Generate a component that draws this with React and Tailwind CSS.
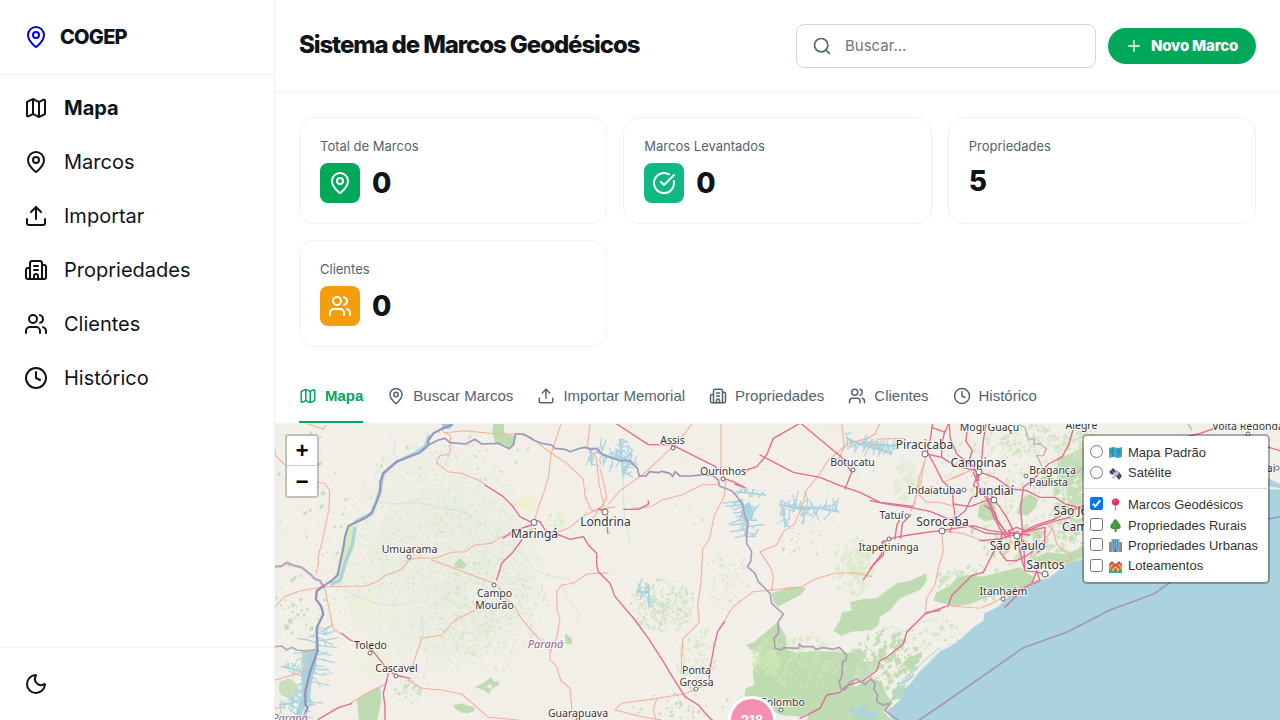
import React from "react";
import {
  Map as MapIcon, MapPin, Upload, Building2, Users, Clock, Moon, Search, Plus, CircleCheckBig,
} from "lucide-react";

const navItems = [
  { icon: MapIcon, label: "Mapa", active: true },
  { icon: MapPin, label: "Marcos" },
  { icon: Upload, label: "Importar" },
  { icon: Building2, label: "Propriedades" },
  { icon: Users, label: "Clientes" },
  { icon: Clock, label: "Histórico" },
];

const tabs = [
  { icon: MapIcon, label: "Mapa", active: true },
  { icon: MapPin, label: "Buscar Marcos" },
  { icon: Upload, label: "Importar Memorial" },
  { icon: Building2, label: "Propriedades" },
  { icon: Users, label: "Clientes" },
  { icon: Clock, label: "Histórico" },
];

const stats = [
  { label: "Total de Marcos", value: "0", icon: MapPin, color: "bg-[#00a859]" },
  { label: "Marcos Levantados", value: "0", icon: CircleCheckBig, color: "bg-[#10b981]" },
  { label: "Propriedades", value: "5" },
  { label: "Clientes", value: "0", icon: Users, color: "bg-[#f59e0b]" },
];

function Sidebar() {
  return (
    <aside className="flex h-full w-[275px] shrink-0 flex-col border-r border-[#eff3f4]">
      <div className="flex h-[75px] shrink-0 items-center gap-3 border-b border-[#eff3f4] px-6">
        <MapPin size={24} color="#0000ee" />
        <span className="text-xl font-extrabold tracking-[-0.75px]">COGEP</span>
      </div>
      <nav className="flex flex-1 flex-col pt-1.5">
        {navItems.map(({ icon: Icon, label, active }) => (
          <a key={label} className="flex h-[54px] items-center gap-4 px-6">
            <Icon size={24} />
            <span className={active ? "text-xl font-bold" : "text-xl"}>{label}</span>
          </a>
        ))}
      </nav>
      <div className="flex h-[73px] shrink-0 items-center border-t border-[#eff3f4] px-6">
        <Moon size={24} />
      </div>
    </aside>
  );
}

function Header() {
  return (
    <header className="flex h-[93px] shrink-0 items-center justify-between border-b border-[#eff3f4] px-6">
      <h1 className="mb-[3px] text-2xl font-extrabold tracking-[-1.1px]">Sistema de Marcos Geodésicos</h1>
      <div className="flex items-center gap-3">
        <label className="flex h-11 w-[300px] items-center gap-[13px] rounded-lg border border-[#cfd9de] px-[15px] text-[#536471]">
          <Search size={20} className="shrink-0" />
          <input className="w-full pt-px text-[15px] outline-none placeholder:text-[#6b7884]" placeholder="Buscar..." />
        </label>
        <button className="flex h-9 w-[148px] items-center gap-2 rounded-full bg-[#00a859] pl-[17px] text-[15px] font-extrabold tracking-[-0.2px] whitespace-nowrap text-white">
          <Plus size={18} strokeWidth={1.75} />
          <span className="pt-px">Novo Marco</span>
        </button>
      </div>
    </header>
  );
}

function StatCard({ label, value, icon: Icon, color }) {
  return (
    <div className="flex h-[107px] flex-col rounded-2xl border border-[#eff3f4] px-5 pt-[18px]">
      <div className="text-[13px] leading-5 text-[#536471]">{label}</div>
      {Icon ? (
        <div className="mt-[7px] flex items-center gap-3">
          <div className={"flex size-10 items-center justify-center rounded-lg text-white " + color}>
            <Icon size={24} />
          </div>
          <span className="text-[28px] leading-8 font-extrabold tracking-[-1px]">{value}</span>
        </div>
      ) : (
        <span className="mt-[9px] text-[28px] leading-8 font-extrabold tracking-[-1px]">{value}</span>
      )}
    </div>
  );
}

/* Deterministic pseudo random generator. */
function generator(seed) {
  let s = seed;
  return () => {
    s = (s * 16807) % 2147483647;
    return s / 2147483647;
  };
}

/* Small vegetation patches inside an ellipse. */
function scatter(seed, cx, cy, rx, ry, n, size) {
  const rnd = generator(seed * 7919);
  let d = "";
  for (let i = 0; i < n; i++) {
    const a = rnd() * Math.PI * 2;
    const r = Math.pow(rnd(), 0.62);
    const x = cx + Math.cos(a) * r * rx;
    const y = cy + Math.sin(a) * r * ry;
    const k = size * (0.3 + rnd() * rnd() * 1.6);
    d += `M${x.toFixed(1)} ${y.toFixed(1)}l${k.toFixed(1)} ${(-k * rnd()).toFixed(1)} ${(k * 0.4 * rnd()).toFixed(1)} ${(k * 0.9).toFixed(1)} ${(-k * 0.9).toFixed(1)} ${(k * 0.5).toFixed(1)}z`;
  }
  return d;
}

/* Dendritic reservoir arms growing from both sides of a centre line. */
function arms(seed, pts, len, step) {
  const rnd = generator(seed * 104729);
  let d = "";
  for (let i = 0; i < pts.length - 1; i++) {
    const [x1, y1] = pts[i];
    const [x2, y2] = pts[i + 1];
    const L = Math.hypot(x2 - x1, y2 - y1);
    const nx = -(y2 - y1) / L;
    const ny = (x2 - x1) / L;
    for (let t = 0; t < L; t += step) {
      const side = rnd() > 0.5 ? 1 : -1;
      const l = len * (0.3 + rnd());
      const x = x1 + ((x2 - x1) * t) / L;
      const y = y1 + ((y2 - y1) * t) / L;
      const mx = x + nx * side * l * 0.5 + (rnd() - 0.5) * 14;
      const my = y + ny * side * l * 0.5 + (rnd() - 0.5) * 14;
      const ex = x + nx * side * l + (rnd() - 0.5) * 22;
      const ey = y + ny * side * l + (rnd() - 0.5) * 22;
      d += `M${x.toFixed(1)} ${y.toFixed(1)}L${mx.toFixed(1)} ${my.toFixed(1)} ${ex.toFixed(1)} ${ey.toFixed(1)}`;
      d += `M${mx.toFixed(1)} ${my.toFixed(1)}l${((rnd() - 0.5) * 22).toFixed(1)} ${((rnd() - 0.5) * 22).toFixed(1)}`;
    }
  }
  return d;
}

const lakes = [
  [3, [[128, 620], [122, 690], [105, 760], [98, 830], [70, 890]], 55, 8, 3.5],
  [5, [[20, 740], [60, 750], [100, 760]], 24, 9, 3],
  [7, [[15, 855], [50, 850], [95, 830]], 26, 8, 3],
  [9, [[945, 85], [950, 135]], 14, 9, 3],
  [13, [[965, 95], [1005, 112], [1045, 115], [1075, 135]], 32, 7, 3.5],
  [15, [[1035, 60], [1045, 170]], 22, 8, 3.5],
  [17, [[1400, 240], [1412, 290], [1415, 350]], 40, 6, 4],
  [19, [[1385, 215], [1470, 225]], 12, 8, 3],
  [21, [[1515, 255], [1560, 262], [1620, 262], [1690, 275]], 34, 6, 3.5],
  [25, [[1525, 270], [1530, 320]], 12, 8, 3],
  [27, [[1715, 55], [1760, 75], [1800, 85], [1850, 100]], 26, 6, 3.5],
  [29, [[1770, 72], [1870, 78]], 14, 7, 3],
  [33, [[1090, 515], [1120, 518]], 26, 6, 4],
  [35, [[1120, 530], [1122, 560]], 8, 9, 3],
  [37, [[1730, 875], [1790, 880]], 26, 7, 5],
  [39, [[1780, 875], [1800, 900]], 18, 7, 4],
];

const speckles = [
  [11, 480, 280, 260, 210, 1700, 4, "#cfe3c2", 0.6],
  [23, 480, 500, 340, 220, 2200, 4, "#cde2c1", 0.6],
  [31, 650, 580, 170, 170, 900, 4.5, "#c5deb9", 0.55],
  [41, 270, 560, 60, 65, 120, 11, "#edf3c9", 0.5],
  [43, 290, 710, 60, 60, 150, 10, "#e8f1c8", 0.6],
  [47, 755, 250, 28, 22, 60, 9, "#e8f1bd", 0.8],
  [53, 840, 300, 35, 25, 60, 6, "#d3ebb6", 0.8],
  [59, 100, 250, 110, 240, 60, 8, "#c0ddb4", 0.9],
  [61, 540, 110, 240, 80, 80, 6, "#c6e0ba", 0.9],
  [67, 60, 570, 90, 100, 50, 8, "#c0ddb4", 0.9],
  [71, 400, 800, 60, 50, 90, 5, "#c0ddb5", 0.9],
  [73, 1160, 555, 100, 80, 620, 5, "#c6dfb9", 0.8],
  [79, 1355, 480, 70, 90, 170, 5, "#cfe3c4", 0.7],
  [83, 1260, 720, 60, 100, 140, 8, "#d2e8bd", 0.8],
  [89, 1220, 870, 160, 60, 90, 6, "#c0dcb4", 0.9],
  [97, 1725, 440, 60, 90, 200, 10, "#d5eabf", 0.75],
  [101, 1580, 360, 70, 60, 50, 6, "#c3deb7", 0.9],
  [103, 1890, 180, 40, 60, 130, 10, "#dcedc4", 0.7],
  [107, 1700, 160, 330, 180, 80, 5, "#cbe2bf", 0.8],
  [109, 2200, 190, 230, 160, 500, 7, "#cde4bd", 0.75],
  [113, 2380, 230, 50, 130, 240, 11, "#bbdaae", 0.8],
  [127, 2270, 380, 150, 60, 260, 9, "#c3dfb6", 0.8],
  [131, 2080, 490, 110, 60, 150, 9, "#c5e0b8", 0.8],
  [137, 1830, 720, 100, 90, 200, 11, "#bedbb1", 0.9],
  [139, 1150, 180, 330, 180, 60, 5, "#cbe2bf", 0.8],
  [149, 2330, 60, 160, 50, 200, 9, "#c8e1b9", 0.75],
  [151, 1980, 640, 90, 60, 70, 8, "#cde4c0", 0.8],
];

const riverSide = [
  "M462 48L450 80 420 100 365 125 325 160 314 215 291 280 240 306",
  "M240 325L233 370 210 430 196 480 170 492",
];

const thinWater = [
  "M300 245l60 5 70-2 70 15 60 10 50 30 30 25",
  "M210 508l30 20 30 10 30 10 40 8 40-2 35-15",
  "M700 365l50 50 30 35 50 20 50 5 30 25",
  "M440 590l5 60 50 40 60 60",
  "M345 45l15 20-5 30 10 20",
  "M860 495l30 60 25 30-10 20",
  "M1045 160l0 60 5 80 15 70",
  "M1800 640l50-20 40 15 50-30 30-5",
];

const orangeRoads = [
  "M100 12l45 16 6-12M0 88l3 20 25 25M130 187l22 5 12 20-2 55-20 95-13 50 2 18-8 30",
  "M0 560l28-30 48-18 72-12 122-2 35-12 30-22 45-15 20-28 30-8 50 2 50-18 40-2 30-20 50-5 25-18 45-8 60-20",
  "M150 505l12 60 12 60 26 18M0 865l30-4M0 780l75-22 20-12",
  "M470 420l50 18 135 52",
  "M505 12l0 25 22 10-3 55-30 5-10 20 35 28 40 5 50 20 20 12",
  "M510 38l60-6 100 10 60 0 35 8 50 40 60 40 50 48 5 50 18 42 20 0 40-8",
  "M858 12l-30 90-8 70-15 50-15 40-10 35",
  "M945 12l-8 70 27 30 8 80 15 65-15 10-20 30",
  "M1020 260l-55 10-35 15-50 40-40 15",
  "M1000 458l-65 4-40 28-35 5-15 20 2 60 8 20-10 60-20 45 0 20 20 20 12 40 28 25 8 90",
  "M670 500l15 30 35 30 15 30 50 60 40 40",
  "M600 570l-60 30-40 45-60 10-25 75-8 30",
  "M400 780l40 25 60 5 60 12 35 30 45 40 90 8",
  "M225 850l60-35 50-25",
  "M1250 12l-30 40-60 60-55 50-70 50-35 40",
  "M1338 12l0 150 15 15-5 50-30 60-15 70-20 30-5 100-10 70 5 50-30 30-20 20-5 105",
  "M975 145l15 60 5 30-20 30M1070 265l60-5 30-20 60-15 60-30 50-2",
  "M1490 510l90-10 40-22 60-18 60-2 50 12",
  "M1490 510l5-40-10-30-30-45 50-20 20-40 35-25 20-50 15-50 40-50 25-40 60-50 50-12 30-15 15-35 60 0",
  "M1435 515l60-5M1435 515l-60 45-20 30-8 20",
  "M1700 12l8 70-20 40M1948 125l-10 60-25 75",
  "M1020 870l20-20 100-14 90-15 60-25M1020 870l80 20 60 10M1145 836l-10 35 8 30",
];

const pinkRoads = [
  "M630 195l55 35 25 25 25 35 30 15 15-5 15 5 15 25 50 18 25 10 40-8 15 25 25 25 0 35 5 20 35 35 15 40 60 70 40 55 45 70 30 50 35 55 40 25 35 40 30 20 40 30",
  "M770 315l-60 20-25 20M740 360l-25 35-35 35-15 50",
  "M200 640l25 20 40 15 30 20 40 50 25 20 45 10M340 760l-15 60 5 40 0 60",
  "M130 898l60-35 40-12",
  "M970 265l25 15 3 60",
  "M1025 12l95 62 70 0 130 65 20 20",
  "M1045 268l45 0 30-15 0-10",
  "M1345 175l30 10 35 18-30-10M1395 152l20-2 30-10 30-35 20-50 80-45",
  "M1455 105l100 52 80 15 60 25 60 20 60 30 100 12",
  "M1580 12l60 50 60 50 30 45-20 50",
  "M1907 285l-25 25-5 45",
  "M1830 365l-5 40-30 30-30 45",
  "M1348 605l-20 30-10 40-12 65-5 50",
  "M1995 572l-40 5-60 60-10 35-50 40-20 10-10 30-40 30-50 15-20 20-40 8-20 40-60 30",
];

const pinkMetro = [
  "M187 0l-5 40-10 45 20 35 25 50 30 30 3 40 5 35-15 50",
  "M170 90l45 10 40 25 60 15 60 20 50 35 45 5 40 20 45 0 30 20 40 10 30 20",
  "M185 10l40 15 10-25M225 20l-10 40 0 40M238 0l2 40 20 50 50 40M295 0l-8 50 20 30-10 30 20 30 10 30",
  "M348 0l-8 50-8 90-10 30M310 145l20 50 25 40 15 40 20 40 20 25",
  "M325 145l-15 40 35 20 15 30 20 50 25 35 15 20",
  "M645 0l-35 15-15 50-20 35-40 20-50 50-25 20-8 65 5 60-4 65",
  "M0 230l60 12 60 8 60 12 60 25 60 20 45 20 60 5 40-10",
  "M35 355l40-15 60-10 75-10 100-15 50 15 60 8 60 5M40 350l-5 20 0 20-35 45",
  "M75 345l5-40 20-40",
  "M250 240l50 8 40-15 30-12-30-30-35 30-20 40-25 20",
  "M165 570l70-25 10-30 60-60 35-10 30-60 20-40M330 350l60-5 30-10",
  "M455 325l40-20 60-20 45-25 45-15M450 330l60-25 50-15 40-10",
  "M395 325l-5 60 20 25 30 0 30-15 20-15M440 335l15 70 10 35 40 5 30 10M460 350l5 80",
  "M500 440l-15 40-20 10-60 60M500 440l10 30-20 10M455 325l70-15-2 60-20 15",
  "M345 245l30 20 10 30 30 40 20 0M430 320l-20-40-20-30-15-20",
  "M415 320l30 20 20-20-25-10-25 10 5 20",
];

const orangeMetro = [
  "M168 100l-20 60-15 80-10 20",
  "M0 70l25-25 80-2M140 205l30 30 40 0 40 12M250 160l50-20M220 175l60-25",
  "M215 322l5 60-15 50-10 50-25 40-5 50",
  "M215 320l60 8 30 10 40 15M305 310l0 20",
  "M440 345l40 15 10 20-10 20M530 300l20 20 10 40 20 20 25 20-5 10-60 5",
  "M240 545l90 8 35-15 80-40 60-30",
  "M540 300l10 10-20 30M460 330l30-10 20 20",
  "M420 345l0 30-20 20",
];

/* Labels hold page coordinates: x, baseline y, font size, text. */
const cities = [
  [534.5, 538, 12, "Maringá"],
  [605.5, 526, 12, "Londrina"],
  [409.5, 553, 10.5, "Umuarama"],
  [494.500, 597, 10.5, "Campo"],
  [494.500, 609, 10.5, "Mourão"],
  [370.500, 649, 10.5, "Toledo"],
  [396.500, 672, 10.5, "Cascavel"],
  [578, 717, 10.5, "Guarapuava"],
  [672.500, 444, 10.5, "Assis"],
  [723, 475, 10.5, "Ourinhos"],
  [852.5, 466, 10.5, "Botucatu"],
  [924.5, 449, 12, "Piracicaba"],
  [978.5, 467, 12, "Campinas"],
  [934.5, 494, 10.5, "Indaiatuba"],
  [994.5, 495, 12, "Jundiaí"],
  [891.5, 519, 10.5, "Tatuí"],
  [942.5, 526, 12, "Sorocaba"],
  [888.5, 551, 10.5, "Itapetininga"],
  [1017.5, 550, 12, "São Paulo"],
  [1045.5, 569, 12, "Santos"],
  [1003.5, 595, 10.5, "Itanhaém"],
  [1052.5, 474, 10.5, "Bragança"],
  [1048.5, 486, 10.5, "Paulista"],
  [1077, 515, 12, "São José"],
  [1085, 531, 12, "Campos"],
  [989.5, 431, 10.5, "Mogi Guaçu"],
  [1081.5, 429, 10.5, "Alegre"],
  [1248, 430, 10.5, "Volta Redonda"],
  [1253, 472, 10.5, "Resendai"],
  [696.5, 674, 10.5, "Ponta"],
  [696.5, 686, 10.5, "Grossa"],
  [782.5, 706, 10.5, "Colombo"],
];

const dots = [
  [534, 522.5, 3], [605, 512, 3], [409, 557, 2], [494, 585, 2], [370, 653, 2], [396, 676, 2],
  [578, 720, 2], [673, 448, 2], [723, 479, 2], [853, 470, 2], [925, 454, 3], [979, 472, 3],
  [964, 490, 2], [994, 500, 3], [907, 516, 2], [942, 531, 3], [889, 539, 2], [1017, 536, 3],
  [1045, 574, 3], [1003, 599, 2], [1026, 476, 2], [1248, 434, 2], [1277, 468, 2], [696, 689, 2], [781, 710, 2],
];

function MapCanvas() {
  return (
    <svg className="block h-full w-full" viewBox="275 424 1005 296" preserveAspectRatio="xMinYMin slice">
      <rect x="275" y="424" width="1005" height="296" fill="#f2efe9" />
      <g transform="translate(275 420) scale(0.33333)" fill="none" strokeLinejoin="round" strokeLinecap="round">
        <ellipse cx="490" cy="430" rx="300" ry="320" fill="#e9efdf" opacity=".3" />
        <ellipse cx="520" cy="450" rx="240" ry="260" fill="#e9efdf" opacity=".35" />
        {speckles.map(([seed, x, y, rx, ry, n, k, c, o]) => (
          <path key={seed} d={scatter(seed, x, y, rx, ry, n, k)} fill={c} opacity={o} />
        ))}

        {/* forests */}
        <g fill="#bedbb1">
          <path d="M655 12l30 0 5 30 30 5-2 30-15 8-15-12-25 0-8-25-3-15z" />
          <path d="M245 838l20-15 50-23 4 40-12 60-55 0z" />
          <path d="M82 690l35-2-5 40-20 14-14-10z" />
          <path d="M15 785l25-10 20 10 15 30-20 20-35-8-10-20z" opacity=".8" />
          <path fillRule="evenodd" d="M650 772l6 14 12-4 6 12-20 10-14 18-14-12-26-8 26-14zM643 792l-8 8 10 8 8-10z" />
          <path d="M535 855l25-5 20 8 20 2-2 12-18 8-20-2-20-12z" transform="translate(0 0)" />
          <path d="M540 430l15-16 12 12 8 10-10 10-25-2z" />
          <path d="M870 640l20 15 0 20-18-5z" />
          <path d="M1490 520l30-10 20-8 40-2 12 6-14 18-36 18-32 18-15-14z" />
          <path d="M1508 605l-40 35-30 25-25 10 15 15 25 5-5 35-15 20 5 45-25 10-5 20 30 20 80 40 60 5 50-30 85-10 25-22 0-60 10-50-8-18-60-5-60-2-60 5-24-8-3-40z" />
          <path d="M1955 460l0 22-20 28-60 25-30 35-30 20-5 25-20 15-60 5-30 12-25-15 20-30 5-25 30-5-5-25 40-10 40-2 60-45 40-8z" />
          <path d="M1715 715l20-30 30 12 0 30 45-8 20 25-40 10-20 30-40-8z" opacity=".8" />
          <path d="M1610 825l40 0 20-20 70-5 50-25 30 10 15 40 20 25-30 25 30 30-260 0z" />
          <path d="M1900 710l25-5 10 20-30 20-25-10zM1850 810l30-15 20 15-20 25-25 5z" />
        </g>
        <g fill="#bedbb1" transform="translate(1785 12)">
          <path d="M190 530l10-25 40-20 20-25 50-10 20 10 60-15 60-15 40 30 10 25-70 25-80 10-50 20-50 8-20-8z" />
          <path d="M328 245l30-18 20 25-5 35-30 5-20-15z" />
          <path d="M450 230l30-20 25 15-8 25-25 25-30-5zM500 170l30-20 20 20-20 20-25 0z" />
          <path d="M490 405l40-20 55 5 60-22 0 30-50 20-60 8-40 10z" />
          <path d="M560 100l40-10 45-25 10 30-10 60-60 20-20-30z" opacity=".8" />
          <path d="M480 325l20-8 25 8-10 18-25 0z" opacity=".7" />
        </g>
        <path d={scatter(7, 1590, 730, 120, 85, 300, 8)} fill="#cde7b4" opacity=".6" />
        <path d={scatter(9, 1470, 710, 45, 60, 130, 10)} fill="#cde7b4" opacity=".8" />
        <path d="M218 320l25-4-5 60-30 80-10 35-30 8 22-60 10-60z" fill="#d5ecc0" />

        {/* ocean */}
        <path
          fill="#aad3df"
          d="M3020 530L3020 905 1855 905 1835 872 1852 860 1875 840 1880 820 1905 790 1930 760 1960 730 1996 693 2030 678 2060 655 2095 622 2125 602 2128 580 2170 560 2195 535 2225 510 2265 488 2290 480 2320 475 2350 452 2360 435 2420 418 2470 405z"
        />
        <path fill="#aad3df" d="M2950 190l20-20 30 15 20 8 0 720-560 0 0-500 470-200z" />
        <path fill="#f2efe9" d="M2960 195l60 10 0 5-60-5z" />
        <path d="M1875 790l25-10 15-15M1850 840l20-25 0-25" stroke="#aad3df" strokeWidth="6" />
        <path d="M1890 800l14-6 30-42 55-56" stroke="#dfe9e0" strokeWidth="3" />
        <path d="M1880 780l30-20 40-40 45-38" stroke="#aad3df" strokeWidth="3" />

        {/* rivers and reservoirs */}
        {riverSide.map((d) => <path key={d} d={d} stroke="#aad3df" strokeWidth="10" />)}
        <path d="M112 690l14-10-2 60-14 40-4 50-30 60-20 10 12-40 15-40-5-60 20-60z" fill="#aad3df" />
        <path d="M498 12l40 0-15 15-15 0z" fill="#a3c9dc" />
        <path d="M1402 260l20-15 15 25-5 30-20 8-15-20zM1540 250l20 10 60 0-20 12-50-5z" fill="#aad3df" />
        {lakes.map(([seed, pts, len, step, w]) => (
          <g key={seed} stroke="#aad3df">
            <path d={"M" + pts.join("L")} strokeWidth={w * 1.8} />
            <path d={arms(seed, pts, len, step)} strokeWidth={w} />
          </g>
        ))}
        {thinWater.map((d) => <path key={d} d={d} stroke="#cbe0e0" strokeWidth="2.5" />)}

        {/* roads */}
        {orangeRoads.map((d) => <path key={d} d={d} stroke="#f9ae98" strokeWidth="3.2" />)}
        {pinkRoads.map((d) => <path key={d} d={d} stroke="#e46b8e" strokeWidth="4" />)}
        <g transform="translate(1785 12)">
          {orangeMetro.map((d) => <path key={d} d={d} stroke="#f9ae98" strokeWidth="3.2" />)}
          {pinkMetro.map((d) => <path key={d} d={d} stroke="#e46b8e" strokeWidth="4" />)}
        </g>
        <path d="M2715 55l60-15 60-20M2975 80l40 12" stroke="#e46b8e" strokeWidth="4" />

        {/* state borders */}
        <g stroke="#a396b8">
          <path d="M530 15L505 24 475 40 460 62 460 75 435 98 365 125 325 160 316 185 316 215 305 245 290 278 275 292 220 318 210 350 205 385 195 430 188 465 170 482 145 498" strokeWidth="6" stroke="#9594b8" />
          <path d="M0 440l20-2 15-10 20 8 25 6 25 20 15 15 15 5 12 20" strokeWidth="7" stroke="#bba6bb" />
          <path d="M145 498l-20 15-2 25 15 20 7 25-20 40 3 70-22 60-15 60 0 40 7 10-15 35-15 20" strokeWidth="7" stroke="#9594b8" />
          <path d="M0 680l20-2 15 12 15-8 15 8 25 3 30-3" strokeWidth="5" stroke="#b9a6bb" />
          <path d="M460 75L490 60 510 55 525 68 572 72 600 58 620 72 670 70 703 86 715 75 722 42 745 42 780 62 800 70 830 75 840 85 870 88 885 95 915 85 930 82 950 88 965 85 980 102 1005 112 1035 122 1065 122 1087 145 1093 168 1113 168 1123 155 1150 158 1160 154 1185 160 1193 170 1200 155 1215 168 1245 168 1275 165 1312 166" strokeWidth="5" stroke="#9a97b8" />
          <path d="M1315 168L1330 180 1333 198 1370 212 1390 235 1403 255 1410 290 1420 310 1415 340 1415 370 1430 395 1427 425 1417 440 1440 460 1450 485 1485 520 1490 550 1525 582 1510 605 1510 640 1497 655 1500 685 1520 690 1525 683 1570 685 1573 672 1580 680 1615 680 1623 688 1645 683 1675 688 1693 682 1715 705 1713 720 1703 725 1700 770 1693 785 1697 805 1710 810 1725 785 1745 778 1770 793 1787 777 1800 790 1797 810 1808 825 1805 845 1825 855 1845 850 1830 872 1875 905" strokeWidth="5" stroke="#ad9eb4" />
          <path d="M2230 12l20 10 10 35 20 0-5 15 20 0 20 15-10 20-20 0 15 30" stroke="#c2b1bd" strokeWidth="4" />
          <path d="M2390 170l50-40 60-40M2740 12l10 18" stroke="#c2b1bd" strokeWidth="4" />
          <path d="M3020 290L2900 310 2750 420 2685 487 2635 523 2505 570 2375 637 2245 683 1995 858 1925 905" strokeWidth="5" />
        </g>
      </g>

      {dots.map(([x, y, r]) => (
        <circle key={x + "-" + y} cx={x} cy={y} r={r} fill="#fff" stroke="#666" strokeWidth="1" />
      ))}
      <g
        fontFamily="'Noto Sans', sans-serif" textAnchor="middle" fill="#333" stroke="#fff" strokeOpacity=".8"
        strokeWidth="2" strokeLinejoin="round" style={{ paintOrder: "stroke" }}
      >
        {cities.map(([x, y, s, name]) => (
          <text key={name} x={x} y={y} fontSize={s}>{name}</text>
        ))}
        <g fill="#8d618b" fontStyle="italic" fontSize="11">
          <text x="545.5" y="648">Paraná</text>
          <text x="290" y="722">Paraná</text>
        </g>
      </g>

      <circle cx="752" cy="720" r="24" fill="#fff" />
      <circle cx="752" cy="720" r="21" fill="#f48fb1" />
      <text x="752" y="725" textAnchor="middle" fontSize="13" fontWeight="700" fill="#fff" fontFamily="Inter, sans-serif">218</text>
    </svg>
  );
}

const emojiArt = {
  world: (
    <>
      <path d="M0 2l4-1 5 1 4-1v10l-4 1-5-1-4 1z" fill="#42a5e8" />
      <path d="M1 3l4-.5 1 2-2 1 1 2-1 3-2-3-1-2zM8 3l4 .2v4l-2 3-1-3-2-1z" fill="#2f9f86" />
      <path d="M4 1v10M9 2v10" stroke="#2588cf" strokeWidth=".6" />
    </>
  ),
  satellite: (
    <>
      <path d="M0 5l4-4 3 3-4 4z" fill="#4b3f6b" />
      <path d="M7 9l3-4 3 4-3 4z" fill="#4b3f6b" />
      <path d="M2 3l3 3M8.500 7l3 4" stroke="#8578a8" strokeWidth=".7" />
      <path d="M4 7l4-4 2.500 3-4 4.500z" fill="#a79ba6" />
      <path d="M5 7l3-2 1 1.500-3 2z" fill="#d4cdd4" />
      <path d="M3.500 9.500l2 2" stroke="#a79ba6" strokeWidth="1.200" />
    </>
  ),
  pin: (
    <>
      <path d="M6.5 6v6.500" stroke="#9a9098" strokeWidth="1.2" />
      <circle cx="6.5" cy="4" r="3.6" fill="#f0245e" />
      <circle cx="5.5" cy="2.7" r="1" fill="#ff7b9b" />
    </>
  ),
  tree: (
    <>
      <path d="M5.7 8h1.8v5H5.7z" fill="#7b5347" />
      <path d="M6.5 0C8 1 9 2 9.200 3.600 11 5 12 6.500 11.700 8.300 11 10 9 10.500 6.500 10.300 4 10.500 2 10 1.300 8.300 1 6.500 2 5 3.800 3.600 4 2 5 1 6.500 0z" fill="#43973f" />
      <path d="M4 5l2-2M4 8l2-1" stroke="#65b34c" />
    </>
  ),
  office: (
    <>
      <path d="M0 3h13v10H0z" fill="#8e8794" />
      <path d="M2.5 0h8v13h-8z" fill="#78abc9" />
      <path d="M4.5 1v9M6.5 1v9M8.5 1v9" stroke="#3a80c5" strokeWidth="1" strokeDasharray="1.5 .8" />
      <path d="M5.5 10h2v3h-2z" fill="#51636e" />
    </>
  ),
  houses: (
    <>
      <path d="M0 8h13v5H0z" fill="#33b67e" />
      <path d="M0 5l3-3 3 3v4H0zM7 5l3-3 3 3v4H7z" fill="#e59652" />
      <path d="M0 5l3-3 3 3M7 5l3-3 3 3" stroke="#d24b3e" fill="none" strokeWidth="1.5" />
      <path d="M3 8l3.5-3.500L10 8v3H3z" fill="#f0b26a" />
      <path d="M2.500 8.500l4-4 4 4" stroke="#c8493c" fill="none" strokeWidth="1.5" />
      <path d="M5.5 8.500h2v2.500h-2z" fill="#8b5540" />
    </>
  ),
};

function LayerRow({ type, art, label, checked }) {
  return (
    <label className="flex h-[20.4px] items-center text-[13px] text-[#333]">
      {type === "radio" ? (
        <span className="-mt-px size-[13px] rounded-full border border-[#767676] bg-white" />
      ) : checked ? (
        <span className="-mt-px flex size-[13px] items-center justify-center rounded-[2px] bg-[#0075ff]">
          <svg width="13" height="13" viewBox="0 0 13 13" fill="none">
            <path d="M2.8 6.8l2.5 2.500 5-6" stroke="#fff" strokeWidth="2" />
          </svg>
        </span>
      ) : (
        <span className="-mt-px size-[13px] rounded-[2.5px] border border-[#767676] bg-white" />
      )}
      <svg className="mt-px mr-[6px] ml-[6px]" width="13" height="13" viewBox="0 0 13 13" fill="none">{emojiArt[art]}</svg>
      <span className="pt-px whitespace-nowrap">{label}</span>
    </label>
  );
}

function MapView() {
  return (
    <section className="relative min-h-0 flex-1 overflow-hidden font-['Liberation_Sans',sans-serif]">
      <MapCanvas />
      <div className="absolute top-[10px] left-[10px] flex flex-col rounded-[4px] border-2 border-black/20 bg-clip-padding">
        <button className="flex h-[30px] w-[30px] items-center justify-center rounded-t-[2px] border-b border-[#ccc] bg-white pt-[5px] font-['Liberation_Mono',monospace] text-[22px] leading-none font-bold text-black">+</button>
        <button className="flex h-[30px] w-[30px] items-center justify-center rounded-b-[2px] bg-white pt-[5px] font-['Liberation_Mono',monospace] text-[22px] leading-none font-bold text-black">−</button>
      </div>
      <div className="absolute top-[10px] right-[10px] h-[150px] w-[188px] rounded-[5px] border-2 border-black/30 bg-white bg-clip-padding pt-[6px]">
        <div className="pl-[6px]">
          <LayerRow type="radio" art="world" label="Mapa Padrão" />
          <LayerRow type="radio" art="satellite" label="Satélite" />
        </div>
        <div className="mt-[5px] mb-[5.4px] border-t border-[#ddd]" />
        <div className="pl-[6px]">
          <LayerRow type="check" art="pin" label="Marcos Geodésicos" checked />
          <LayerRow type="check" art="tree" label="Propriedades Rurais" />
          <LayerRow type="check" art="office" label="Propriedades Urbanas" />
          <LayerRow type="check" art="houses" label="Loteamentos" />
        </div>
      </div>
    </section>
  );
}

export default function App() {
  return (
    <div className="flex h-screen w-full overflow-hidden bg-white font-['Inter',sans-serif] text-[#0f1419]">
      <Sidebar />
      <main className="flex min-w-0 flex-1 flex-col">
        <Header />
        <div className="grid shrink-0 grid-cols-3 gap-4 px-6 pt-6">
          {stats.map((s) => <StatCard key={s.label} {...s} />)}
        </div>
        <div className="mt-[22px] flex h-[55px] shrink-0 gap-6 border-b border-[#eff3f4] px-6 font-['Liberation_Sans',sans-serif] text-[15px]">
          {tabs.map(({ icon: Icon, label, active }) => (
            <button
              key={label}
              className={
                active
                  ? "flex items-center gap-2 border-b-2 border-[#00a859] pt-0.5 font-bold whitespace-nowrap text-[#00a859]"
                  : "flex items-center gap-2 border-b-2 border-transparent pt-0.5 whitespace-nowrap text-[#536471]"
              }
            >
              <Icon size={18} />
              {label}
            </button>
          ))}
        </div>
        <MapView />
      </main>
    </div>
  );
}
